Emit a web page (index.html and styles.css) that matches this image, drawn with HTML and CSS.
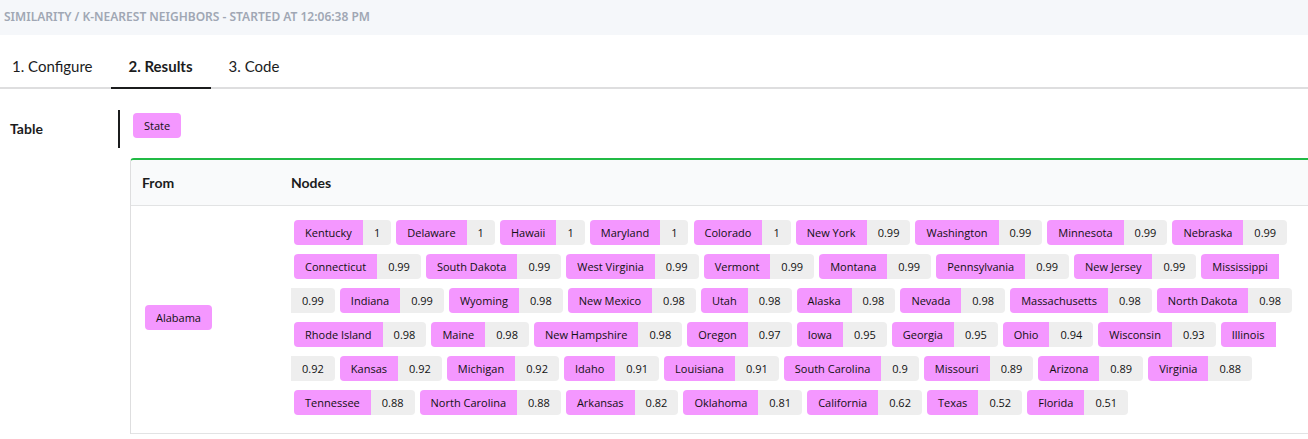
FILE: index.html
```html
<!DOCTYPE html>
<html lang="en">
<head>
<meta charset="utf-8">
<title>K-Nearest Neighbors</title>
<link rel="stylesheet" href="styles.css">
</head>
<body>
<header class="task-title">SIMILARITY / K-NEAREST NEIGHBORS - STARTED AT 12:06:38 PM</header>
<nav class="tabs">
<button class="tab" type="button">1. Configure</button>
<button class="tab tab-active" type="button">2. Results</button>
<button class="tab" type="button">3. Code</button>
</nav>
<main class="results">
<nav class="side-menu"><a class="side-item" href="#table">Table</a></nav>
<section class="content" id="table">
<div class="legend"><span class="label single">State</span></div>
<div class="table-frame">
<table class="result-table">
<thead><tr><th class="from-col" scope="col">From</th><th scope="col">Nodes</th></tr></thead>
<tbody>
<tr>
<td><span class="label single node">Alabama</span></td>
<td class="nodes">
<span class="pair"><span class="label name">Kentucky</span><wbr><span class="label score">1</span></span>
<span class="pair"><span class="label name">Delaware</span><wbr><span class="label score">1</span></span>
<span class="pair"><span class="label name">Hawaii</span><wbr><span class="label score">1</span></span>
<span class="pair"><span class="label name">Maryland</span><wbr><span class="label score">1</span></span>
<span class="pair"><span class="label name">Colorado</span><wbr><span class="label score">1</span></span>
<span class="pair"><span class="label name">New York</span><wbr><span class="label score">0.99</span></span>
<span class="pair"><span class="label name">Washington</span><wbr><span class="label score">0.99</span></span>
<span class="pair"><span class="label name">Minnesota</span><wbr><span class="label score">0.99</span></span>
<span class="pair"><span class="label name">Nebraska</span><wbr><span class="label score">0.99</span></span>
<span class="pair"><span class="label name">Connecticut</span><wbr><span class="label score">0.99</span></span>
<span class="pair"><span class="label name">South Dakota</span><wbr><span class="label score">0.99</span></span>
<span class="pair"><span class="label name">West Virginia</span><wbr><span class="label score">0.99</span></span>
<span class="pair"><span class="label name">Vermont</span><wbr><span class="label score">0.99</span></span>
<span class="pair"><span class="label name">Montana</span><wbr><span class="label score">0.99</span></span>
<span class="pair"><span class="label name">Pennsylvania</span><wbr><span class="label score">0.99</span></span>
<span class="pair"><span class="label name">New Jersey</span><wbr><span class="label score">0.99</span></span>
<span class="pair"><span class="label name">Mississippi</span><wbr><span class="label score">0.99</span></span>
<span class="pair"><span class="label name">Indiana</span><wbr><span class="label score">0.99</span></span>
<span class="pair"><span class="label name">Wyoming</span><wbr><span class="label score">0.98</span></span>
<span class="pair"><span class="label name">New Mexico</span><wbr><span class="label score">0.98</span></span>
<span class="pair"><span class="label name">Utah</span><wbr><span class="label score">0.98</span></span>
<span class="pair"><span class="label name">Alaska</span><wbr><span class="label score">0.98</span></span>
<span class="pair"><span class="label name">Nevada</span><wbr><span class="label score">0.98</span></span>
<span class="pair"><span class="label name">Massachusetts</span><wbr><span class="label score">0.98</span></span>
<span class="pair"><span class="label name">North Dakota</span><wbr><span class="label score">0.98</span></span>
<span class="pair"><span class="label name">Rhode Island</span><wbr><span class="label score">0.98</span></span>
<span class="pair"><span class="label name">Maine</span><wbr><span class="label score">0.98</span></span>
<span class="pair"><span class="label name">New Hampshire</span><wbr><span class="label score">0.98</span></span>
<span class="pair"><span class="label name">Oregon</span><wbr><span class="label score">0.97</span></span>
<span class="pair"><span class="label name">Iowa</span><wbr><span class="label score">0.95</span></span>
<span class="pair"><span class="label name">Georgia</span><wbr><span class="label score">0.95</span></span>
<span class="pair"><span class="label name">Ohio</span><wbr><span class="label score">0.94</span></span>
<span class="pair"><span class="label name">Wisconsin</span><wbr><span class="label score">0.93</span></span>
<span class="pair"><span class="label name">Illinois</span><wbr><span class="label score">0.92</span></span>
<span class="pair"><span class="label name">Kansas</span><wbr><span class="label score">0.92</span></span>
<span class="pair"><span class="label name">Michigan</span><wbr><span class="label score">0.92</span></span>
<span class="pair"><span class="label name">Idaho</span><wbr><span class="label score">0.91</span></span>
<span class="pair"><span class="label name">Louisiana</span><wbr><span class="label score">0.91</span></span>
<span class="pair"><span class="label name">South Carolina</span><wbr><span class="label score">0.9</span></span>
<span class="pair"><span class="label name">Missouri</span><wbr><span class="label score">0.89</span></span>
<span class="pair"><span class="label name">Arizona</span><wbr><span class="label score">0.89</span></span>
<span class="pair"><span class="label name">Virginia</span><wbr><span class="label score">0.88</span></span>
<span class="pair"><span class="label name">Tennessee</span><wbr><span class="label score">0.88</span></span>
<span class="pair"><span class="label name">North Carolina</span><wbr><span class="label score">0.88</span></span>
<span class="pair"><span class="label name">Arkansas</span><wbr><span class="label score">0.82</span></span>
<span class="pair"><span class="label name">Oklahoma</span><wbr><span class="label score">0.81</span></span>
<span class="pair"><span class="label name">California</span><wbr><span class="label score">0.62</span></span>
<span class="pair"><span class="label name">Texas</span><wbr><span class="label score">0.52</span></span>
<span class="pair"><span class="label name">Florida</span><wbr><span class="label score">0.51</span></span>
</td>
</tr>
</tbody>
</table>
</div>
</section>
</main>
</body>
</html>
```
FILE: styles.css
```css
* { box-sizing: border-box; }

body {
  margin: 0;
  background: #fff;
  color: #1b1c1d;
  font: 14px/20px Lato, sans-serif;
}

.task-title {
  padding: 7px 4px 8px;
  background: #f5f7fa;
  color: #a0a7b4;
  font: 600 12px/20px "Noto Sans", sans-serif;
}

.tabs {
  display: flex;
  padding-top: 10px;
  border-bottom: 2px solid #dededf;
}

.tab {
  margin: 0 0 -2px;
  padding: 11px 18px;
  border: 0;
  border-bottom: 2px solid transparent;
  background: none;
  color: #1b1c1d;
  font: 400 15px/20px Lato, sans-serif;
}

.tab:first-child { padding-left: 12px; }

.tab-active {
  border-bottom-color: #1b1c1d;
  font-weight: 700;
}

.results {
  display: flex;
  align-items: flex-start;
  padding-top: 21px;
}

.side-menu { flex: 0 0 120px; }

.side-item {
  display: block;
  padding: 9px 10px;
  border-right: 2px solid #1b1c1d;
  color: #1b1c1d;
  font-weight: 700;
  text-decoration: none;
}

.content {
  flex: 1;
  min-width: 0;
  padding-left: 10px;
}

.legend {
  display: flex;
  padding: 3px 3px 20px;
}

.table-frame {
  border-top: 2px solid #21ba45;
  border-left: 1px solid #dededf;
  border-top-left-radius: 4px;
  overflow: hidden;
}

.result-table {
  width: 100%;
  border-spacing: 0;
}

th {
  padding: 13px 11px 12px;
  border-bottom: 1px solid #e2e3e4;
  background: #f9fafb;
  text-align: left;
  font: 700 14px/20px Lato, sans-serif;
}

.from-col { width: 149px; }

td {
  padding: 14px 11px 9px;
  border-bottom: 1px solid #e2e3e4;
  font-size: 8px;
  line-height: 34px;
}

.nodes { padding-right: 0; }

.label {
  display: inline-block;
  padding: 0 11px;
  color: #111;
  font: 400 11px/25px "Open Sans", sans-serif;
  vertical-align: top;
  white-space: nowrap;
}

.single, .name { background: #f497ff; }

.single { border-radius: 4px; }

.node { margin-left: 3px; }

.name {
  margin-left: 3px;
  border-radius: 4px 0 0 4px;
}

.score {
  background: #eee;
  border-radius: 0 4px 4px 0;
}
```
